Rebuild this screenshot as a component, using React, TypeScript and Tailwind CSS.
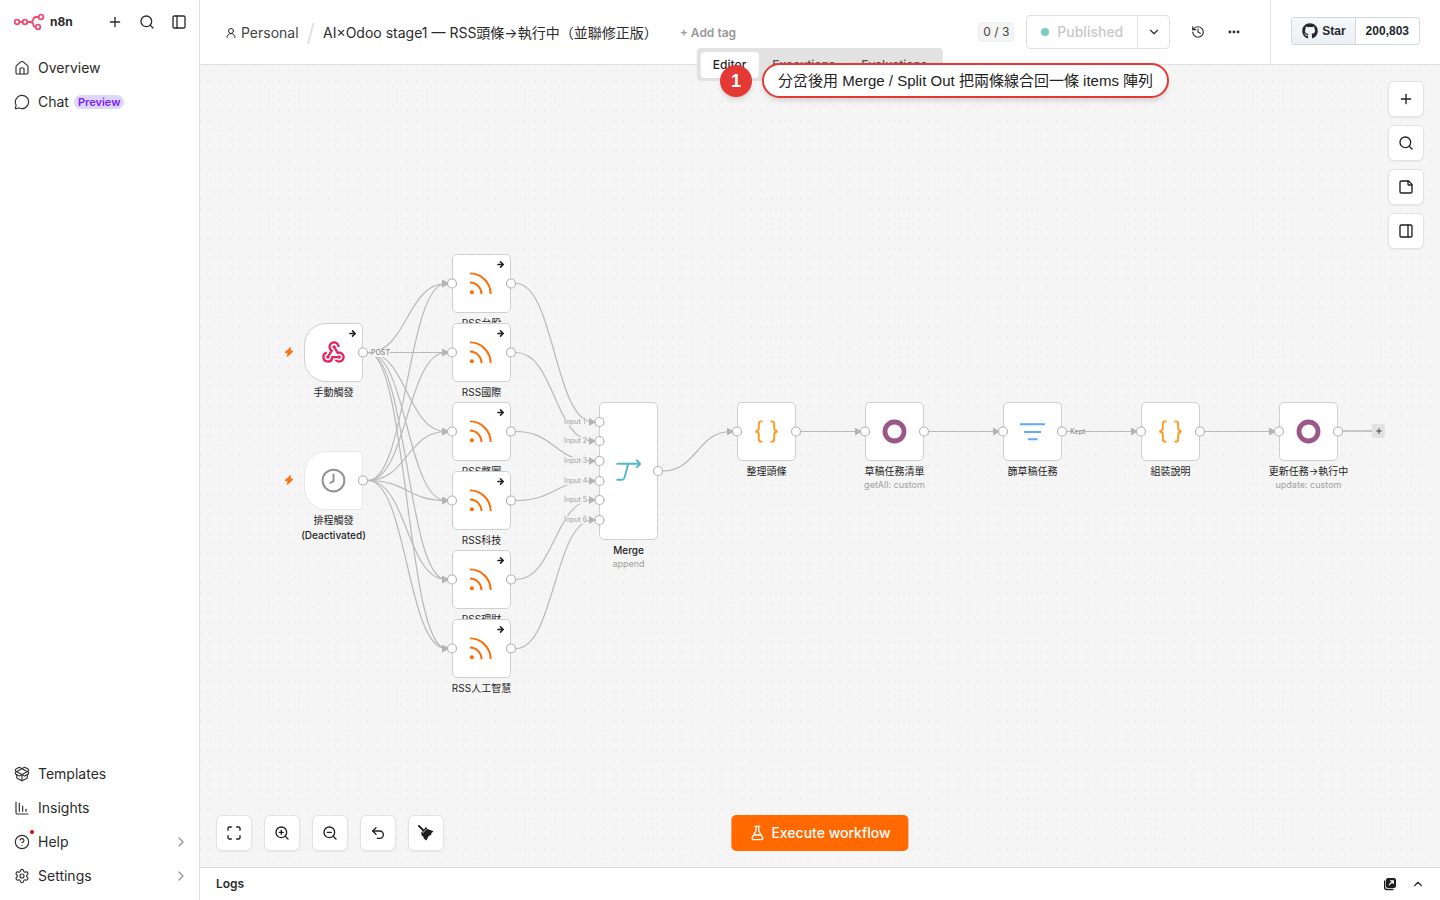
import type { ReactNode } from "react";
import {
  ArrowRight,
  ChartColumnDecreasing,
  ChevronDown,
  ChevronRight,
  ChevronUp,
  CircleHelp,
  Ellipsis,
  FlaskConical,
  History,
  House,
  Maximize,
  MessageCircle,
  PackageOpen,
  PanelLeft,
  PanelRight,
  Plus,
  Search,
  Settings,
  StickyNote,
  Undo2,
  UserRound,
  ZoomIn,
  ZoomOut,
} from "lucide-react";
import { FaGithub } from "react-icons/fa";
import { MdWebhook } from "react-icons/md";

type Kind = "webhook" | "clock" | "rss" | "merge" | "code" | "odoo" | "filter";

type FlowNode = {
  id: string;
  kind: Kind;
  title: string;
  note?: string;
  x: number;
  y: number;
  trigger?: boolean;
  off?: boolean;
  outLabel?: string;
};

const SIZE = 59;
const MERGE_H = 138;

const nodes: FlowNode[] = [
  { id: "manual", kind: "webhook", title: "手動觸發", x: 104, y: 258, trigger: true, outLabel: "POST" },
  { id: "cron", kind: "clock", title: "排程觸發", x: 104, y: 386, trigger: true, off: true },
  { id: "rss1", kind: "rss", title: "RSS台股", x: 252, y: 189 },
  { id: "rss2", kind: "rss", title: "RSS國際", x: 252, y: 258 },
  { id: "rss3", kind: "rss", title: "RSS幣圈", x: 252, y: 337 },
  { id: "rss4", kind: "rss", title: "RSS科技", x: 252, y: 406 },
  { id: "rss5", kind: "rss", title: "RSS理財", x: 252, y: 485 },
  { id: "rss6", kind: "rss", title: "RSS人工智慧", x: 252, y: 554 },
  { id: "merge", kind: "merge", title: "Merge", note: "append", x: 399, y: 337 },
  { id: "tidy", kind: "code", title: "整理頭條", x: 537, y: 337 },
  { id: "drafts", kind: "odoo", title: "草稿任務清單", note: "getAll: custom", x: 665, y: 337 },
  { id: "filter", kind: "filter", title: "篩草稿任務", x: 803, y: 337, outLabel: "Kept" },
  { id: "compose", kind: "code", title: "組裝說明", x: 941, y: 337 },
  { id: "update", kind: "odoo", title: "更新任務→執行中", note: "update: custom", x: 1079, y: 337 },
];

const rssIds = ["rss1", "rss2", "rss3", "rss4", "rss5", "rss6"];
const inputYs = [20, 39, 59, 79, 98, 118];

const byId = (id: string) => nodes.find((n) => n.id === id)!;
const heightOf = (n: FlowNode) => (n.kind === "merge" ? MERGE_H : SIZE);

function edge(from: string, to: string, input?: number) {
  const a = byId(from);
  const b = byId(to);
  const x1 = a.x + SIZE + 5;
  const y1 = a.y + heightOf(a) / 2;
  const x2 = b.x - 6;
  const y2 = input === undefined ? b.y + SIZE / 2 : b.y + inputYs[input];
  const mid = (x1 + x2) / 2;
  return { key: `${from}-${to}-${input ?? 0}`, d: `M${x1} ${y1}C${mid} ${y1} ${mid} ${y2} ${x2} ${y2}` };
}

const edges = [
  ...rssIds.map((id) => edge("manual", id)),
  ...rssIds.map((id) => edge("cron", id)),
  ...rssIds.map((id, i) => edge(id, "merge", i)),
  edge("merge", "tidy"),
  edge("tidy", "drafts"),
  edge("drafts", "filter"),
  edge("filter", "compose"),
  edge("compose", "update"),
];

function N8nLogo() {
  return (
    <svg width="32" height="18" viewBox="0 0 32 18" fill="none" stroke="#ea4b71" strokeWidth="1.8">
      <circle cx="3" cy="9" r="2.300" />
      <circle cx="11" cy="9" r="2.300" />
      <circle cx="27" cy="4" r="2.300" />
      <circle cx="24" cy="14" r="2.300" />
      <path d="M5.300 9h3.400M13.300 9h3M24.700 4h-2.500a3 3 0 0 0-3 2.500c-.2 1.500-.8 2.500-2.900 2.500 2.100 0 2.700 1 2.900 2.500.2 1.500 1 2.500 2.500 2.500" />
    </svg>
  );
}

function Bolt() {
  return (
    <svg width="10" height="10" viewBox="0 0 10 10" fill="#ff6f14" stroke="#ff6f14" strokeWidth="1" strokeLinejoin="round">
      <path d="M6.500.6 1 5.500 4.200 6.100 3.200 9.500 9 4.300 5.900 3.700Z" />
    </svg>
  );
}

function Broom() {
  return (
    <svg width="16" height="16" viewBox="0 0 16 16" fill="#1f1f1f">
      <path d="m1 1 4.500 4.500" stroke="#1f1f1f" strokeWidth="1.800" strokeLinecap="round" />
      <path d="M8 1.800 9.300 4l6.200 2.200-2.300 2.300.2 1.300-2.600 1.200L8.300 15.500 6 13.800l-.8-2.300-1.500-1L3 7.800l1.500-1.300Z" />
      <path d="m4.300 8.300 4.400-4.500" stroke="#fff" strokeWidth=".7" />
    </svg>
  );
}

function PopOut() {
  return (
    <svg width="14" height="14" viewBox="0 0 14 14" fill="none">
      <path d="M1.700 4v6.500a2 2 0 0 0 2 2H10" stroke="#1f1f1f" strokeWidth="1.400" strokeLinecap="round" />
      <rect x="3" y="1" width="10" height="10" rx="2" fill="#1f1f1f" />
      <path d="M6 8 10 4M7 3.700h3.300v3.300" stroke="#fff" strokeWidth="1.100" />
    </svg>
  );
}

function KindIcon({ kind }: { kind: Kind }) {
  if (kind === "webhook") return <MdWebhook size={27} color="#e6225f" />;
  return (
    <svg width="25" height="25" viewBox="0 0 26 26" fill="none">
      {kind === "clock" && (
        <g stroke="#939393" strokeWidth="2.100">
          <circle cx="13" cy="13" r="11.300" />
          <path d="M13 6v7c0 1.500-1.500 2-4 2.500" />
        </g>
      )}
      {kind === "rss" && (
        <g stroke="#ff6a00" strokeWidth="2">
          <path d="M1 2.500A21.500 21.500 0 0 1 22.500 24" />
          <path d="M1 12A12 12 0 0 1 13 24" />
          <circle cx="3" cy="22" r="2.100" fill="#ff6a00" stroke="none" />
        </g>
      )}
      {kind === "merge" && (
        <g stroke="#54b8c9" strokeWidth="2">
          <path d="M.5 5h24.500M21 .8 25.200 5 21 9.200" />
          <path d="M.5 21.500H6c1.500 0 2.300-.6 2.800-2L12.800 5" />
        </g>
      )}
      {kind === "code" && (
        <g stroke="#ff9922" strokeWidth="2">
          <path d="M9 2.500H7.500C6 2.500 5 3.300 5 5v5c0 1.500-1 2.500-3.500 3 2.500.5 3.500 1.500 3.500 3v5c0 1.700 1 2.500 2.500 2.500H9" />
          <path d="M17 2.500h1.500C20 2.500 21 3.300 21 5v5c0 1.500 1 2.500 3.500 3-2.500.5-3.500 1.500-3.500 3v5c0 1.700-1 2.500-2.500 2.500H17" />
        </g>
      )}
      {kind === "odoo" && <circle cx="13" cy="13" r="9.900" stroke="#9c5789" strokeWidth="5" />}
      {kind === "filter" && (
        <path d="M0 5.500h26M4.300 13.500h17.500M8.300 21h10" stroke="#5fabf5" strokeWidth="2" />
      )}
    </svg>
  );
}

function NodeCard({ node }: { node: FlowNode }) {
  const shape = node.trigger ? "rounded-l-[22px] rounded-r-[5px]" : "rounded-[5px]";
  const border = node.off ? "border-[#e8e8e8]" : "border-[#cfcfcf]";
  const isMerge = node.kind === "merge";
  return (
    <div className="absolute w-[59px]" style={{ left: node.x, top: node.y }}>
      <div
        className={`relative flex items-center justify-center border bg-white ${shape} ${border} ${isMerge ? "h-[138px]" : "h-[59px]"}`}
      >
        <KindIcon kind={node.kind} />
        {(node.kind === "rss" || node.kind === "webhook") && (
          <ArrowRight size={9} strokeWidth={4} className="absolute right-[5px] top-[5px] text-[#1f1f1f]" />
        )}
        {node.trigger && (
          <span className="absolute -left-[21px] top-[23px]">
            <Bolt />
          </span>
        )}
      </div>
      <div className="-mx-10 mt-[3px] text-center text-[10px] leading-[15px] text-[#1f1f1f]">
        <p className={isMerge ? "font-medium" : ""}>{node.title}</p>
        {node.off && <p className="font-medium">(Deactivated)</p>}
      </div>
      {node.note && (
        <p className="-mx-10 text-center text-[9px] leading-3 text-[#a0a0a0]">{node.note}</p>
      )}
    </div>
  );
}

function Handle({ x, y }: { x: number; y: number }) {
  return <circle cx={x} cy={y} r="4.500" fill="#fff" stroke="#b4b4b4" strokeWidth="1.200" />;
}

function Canvas() {
  return (
    <>
      <svg className="absolute inset-0 h-full w-full" fill="none">
        <defs>
          <pattern id="dots" width="9.840" height="9.840" patternUnits="userSpaceOnUse" x="-4.500" y="1.400">
            <circle cx="4.920" cy="4.920" r=".6" fill="#d6d6d6" />
          </pattern>
          <marker id="arrow" viewBox="0 0 7 8" refX="4" refY="4" markerWidth="7" markerHeight="8" markerUnits="userSpaceOnUse">
            <path d="M0 0 7 4 0 8Z" fill="#b4b4b4" />
          </marker>
        </defs>
        <rect width="100%" height="100%" fill="url(#dots)" />
        <g stroke="#b9b9b9" strokeWidth="1.200">
          {edges.map((e) => (
            <path key={e.key} d={e.d} markerEnd="url(#arrow)" />
          ))}
          <path d="M1142 366h30" strokeWidth="1.600" />
        </g>
      </svg>

      {nodes.map((n) => (
        <NodeCard key={n.id} node={n} />
      ))}

      <svg className="pointer-events-none absolute inset-0 h-full w-full">
        {nodes.map((n) => (
          <g key={n.id}>
            {!n.trigger && n.kind !== "merge" && <Handle x={n.x} y={n.y + SIZE / 2} />}
            {n.kind === "merge" && inputYs.map((y) => <Handle key={y} x={n.x + 0.5} y={n.y + y} />)}
            <Handle x={n.x + SIZE} y={n.y + heightOf(n) / 2} />
          </g>
        ))}
      </svg>

      {nodes
        .filter((n) => n.outLabel)
        .map((n) => (
          <span
            key={n.id}
            className="absolute bg-[#f5f5f5] text-[7px] font-medium leading-[8px] text-[#858585]"
            style={{ left: n.x + SIZE + 8, top: n.y + 26 }}
          >
            {n.outLabel}
          </span>
        ))}
      {inputYs.map((y, i) => (
        <span
          key={y}
          className="absolute left-[364px] bg-[#f5f5f5]/80 text-[7px] leading-[8px] text-[#a0a0a0]"
          style={{ top: 337 + y - 4 }}
        >
          Input {i + 1}
        </span>
      ))}
      <button
        aria-label="Add node"
        className="absolute left-[1172px] top-[359px] flex h-[14px] w-[13px] items-center justify-center rounded-[2px] bg-[#e2e2e2] text-[#444]"
      >
        <Plus size={8} strokeWidth={3} />
      </button>
    </>
  );
}

function SideLink({ icon, label, children }: { icon: ReactNode; label: string; children?: ReactNode }) {
  return (
    <a href="#" className="flex h-[34px] items-center gap-2 px-[14px] text-[#333]">
      {icon}
      <span className="text-sm text-[#2b2b2b]">{label}</span>
      {children}
    </a>
  );
}

function Square({ label, children }: { label: string; children: ReactNode }) {
  return (
    <button
      aria-label={label}
      className="flex size-9 items-center justify-center rounded-md border border-[#e2e2e2] bg-white text-[#1f1f1f] shadow-xs"
    >
      {children}
    </button>
  );
}

function Sidebar() {
  return (
    <aside className="flex w-[200px] shrink-0 flex-col border-r border-[#e0e0e0] bg-white">
      <div className="flex h-11 items-center pl-[14px] pr-3 text-[#2b2b2b]">
        <N8nLogo />
        <span className="ml-1 text-xs font-bold">n8n</span>
        <div className="ml-auto flex gap-4">
          <button aria-label="Create"><Plus size={16} /></button>
          <button aria-label="Search"><Search size={16} /></button>
          <button aria-label="Collapse sidebar"><PanelLeft size={16} /></button>
        </div>
      </div>
      <nav className="mt-[7px]">
        <SideLink icon={<House size={16} strokeWidth={1.75} />} label="Overview" />
        <SideLink icon={<MessageCircle size={16} strokeWidth={1.75} />} label="Chat">
          <span className="-ml-[3px] rounded-full bg-[#ddd6fe] px-1 text-[11px] font-semibold leading-[14px] text-[#7f22fe]">
            Preview
          </span>
        </SideLink>
      </nav>
      <nav className="mb-[7px] mt-auto">
        <SideLink icon={<PackageOpen size={16} strokeWidth={1.75} />} label="Templates" />
        <SideLink icon={<ChartColumnDecreasing size={16} strokeWidth={1.75} />} label="Insights" />
        <SideLink
          icon={
            <span className="relative">
              <CircleHelp size={16} strokeWidth={1.75} />
              <span className="absolute -right-1 -top-1 size-1 rounded-full bg-[#e7000b]" />
            </span>
          }
          label="Help"
        >
          <ChevronRight size={16} strokeWidth={2} className="ml-auto -mr-1 text-[#999]" />
        </SideLink>
        <SideLink icon={<Settings size={16} strokeWidth={1.75} />} label="Settings">
          <ChevronRight size={16} strokeWidth={2} className="ml-auto -mr-1 text-[#999]" />
        </SideLink>
      </nav>
    </aside>
  );
}

function Header() {
  return (
    <header className="flex h-[65px] shrink-0 items-center border-b border-[#e0e0e0] bg-white text-[#2b2b2b]">
      <div className="flex items-center pl-[25px] pt-[2px] text-sm">
        <UserRound size={12} strokeWidth={2} />
        <a href="#" className="ml-1 text-[#444]">Personal</a>
        <span className="mx-2 text-2xl leading-6 font-light text-[#dcdcdc]">/</span>
        <h1>AI×Odoo stage1 — RSS頭條→執行中（並聯修正版）</h1>
        <button className="ml-[22px] text-xs font-semibold text-[#999]">+ Add tag</button>
      </div>
      <div className="ml-auto flex items-center pr-[29px]">
        <span className="rounded-sm border border-[#eee] bg-[#f4f4f4] px-1 text-xs leading-[18px] text-[#444]">0 / 3</span>
        <div className="ml-3 flex h-[34px] rounded-sm border border-[#e0e0e0]">
          <button className="flex items-center gap-2 border-r border-[#e0e0e0] px-[14px] text-sm font-medium text-[#c8c8c8]">
            <span className="size-2 rounded-full bg-[#7ccac2]" />
            Published
          </button>
          <button aria-label="Publish options" className="flex w-[31px] items-center justify-center">
            <ChevronDown size={14} />
          </button>
        </div>
        <button aria-label="History" className="ml-[21px]"><History size={14} /></button>
        <button aria-label="More" className="ml-[22px]"><Ellipsis size={14} strokeWidth={3} /></button>
      </div>
      <div className="flex h-full items-center border-l border-[#e0e0e0] px-5 pb-[3px]">
        <a
          href="#"
          className="flex h-7 items-center overflow-hidden rounded-[3px] border border-[#d1d9e0] font-['Liberation_Sans',sans-serif] text-xs font-bold text-[#25292e]"
        >
          <span className="flex h-full items-center gap-1 border-r border-[#d1d9e0] bg-linear-to-b from-[#f6f8fa] to-[#ebf0f4] pl-[10px] pr-[9px]">
            <FaGithub size={16} />
            Star
          </span>
          <span className="px-[10px]">200,803</span>
        </a>
      </div>
    </header>
  );
}

export default function App() {
  return (
    <div className="flex h-screen overflow-hidden bg-white font-[Inter,'Noto_Sans_CJK_JP',sans-serif]">
      <Sidebar />
      <div className="relative flex min-w-0 flex-1 flex-col">
        <Header />

        <main className="relative flex-1 overflow-hidden bg-[#f5f5f5]">
          <Canvas />
          <div className="absolute right-4 top-4 flex flex-col gap-2">
            <Square label="Add node"><Plus size={16} /></Square>
            <Square label="Search nodes"><Search size={16} /></Square>
            <Square label="Add sticky note"><StickyNote size={16} /></Square>
            <Square label="Toggle panel"><PanelRight size={16} /></Square>
          </div>
          <div className="absolute bottom-4 left-4 flex gap-3">
            <Square label="Fit view"><Maximize size={16} /></Square>
            <Square label="Zoom in"><ZoomIn size={16} /></Square>
            <Square label="Zoom out"><ZoomOut size={16} /></Square>
            <Square label="Undo"><Undo2 size={16} /></Square>
            <Square label="Tidy up"><Broom /></Square>
          </div>
          <button className="absolute bottom-4 left-1/2 flex h-9 -translate-x-1/2 items-center gap-[6px] rounded-[5px] bg-[#ff6900] px-[18px] text-sm font-medium text-white">
            <FlaskConical size={16} />
            Execute workflow
          </button>
        </main>

        <footer className="flex h-[33px] shrink-0 items-center border-t border-[#dcdcdc] bg-white pl-4 pr-[15px] text-xs font-semibold text-[#2b2b2b]">
          Logs
          <div className="ml-auto flex items-center gap-[14px]">
            <button aria-label="Pop out logs"><PopOut /></button>
            <button aria-label="Open logs"><ChevronUp size={14} /></button>
          </div>
        </footer>

        <div className="absolute left-1/2 top-12 flex h-[33px] -translate-x-1/2 items-center gap-[2px] rounded-sm bg-[#e2e2e2] px-1 text-xs font-medium text-[#555]">
          <button className="h-[26px] rounded-sm bg-white px-3 text-[#1f1f1f]">Editor</button>
          <button className="h-[26px] px-3">Executions</button>
          <button className="h-[26px] px-3">Evaluations</button>
        </div>

        <div className="absolute left-1/2 top-[63px] -ml-[100px] flex items-center gap-[10px] whitespace-nowrap font-['Liberation_Sans','Noto_Sans_CJK_JP',sans-serif]">
          <span className="flex size-8 items-center justify-center rounded-full bg-[#e53935] text-lg font-bold text-white shadow-md">
            1
          </span>
          <p className="flex h-[35px] items-center rounded-full border-2 border-[#e53935] bg-white px-[14px] pt-[2px] text-[15px] text-[#222] shadow-md">
            分岔後用 Merge / Split Out 把兩條線合回一條 items 陣列
          </p>
        </div>
      </div>
    </div>
  );
}
